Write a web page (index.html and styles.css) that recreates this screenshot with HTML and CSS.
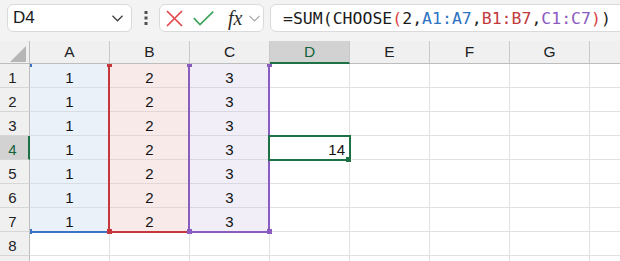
FILE: index.html
```html
<!DOCTYPE html>
<html lang="en">
  <head>
    <meta charset="UTF-8" />
    <title>CHOOSE</title>
    <link rel="stylesheet" href="styles.css">
  </head>
  <body>
    <div class="toolbar">
      <div class="namebox">
        <span>D4</span>
        <svg width="11" height="7" viewBox="0 0 11 7"><polyline points="0.5,0.8 5.5,5.8 10.5,0.8" fill="none" stroke="#404040" stroke-width="1.3"/></svg>
      </div>
      <div class="dots">
        <svg width="4" height="14" viewBox="0 0 4 14"><rect x="0.5" y="0" width="3" height="3" fill="#505050"/><rect x="0.5" y="5.5" width="3" height="3" fill="#505050"/><rect x="0.5" y="11" width="3" height="3" fill="#505050"/></svg>
      </div>
      <div class="fxbox">
        <svg class="cancel" width="17" height="17" viewBox="0 0 17 17"><path d="M1 1 L16 16 M16 1 L1 16" stroke="#e2474b" stroke-width="1.7" fill="none"/></svg>
        <svg class="enter" width="21" height="15" viewBox="0 0 21 15"><polyline points="0.8,7.2 7,13.6 20.2,0.6" fill="none" stroke="#3ea45c" stroke-width="1.7"/></svg>
        <span class="fx">fx</span>
        <svg class="more" width="11" height="7" viewBox="0 0 11 7"><polyline points="0.5,0.8 5.5,5.8 10.5,0.8" fill="none" stroke="#a6a6a6" stroke-width="1.2"/></svg>
      </div>
      <div class="formula"><span>=SUM(CHOOSE</span><span class="paren">(</span><span>2,</span><span class="ref-a">A1:A7</span><span>,</span><span class="ref-b">B1:B7</span><span>,</span><span class="ref-c">C1:C7</span><span class="paren">)</span><span>)</span></div>
    </div>

    <div class="sheet">
      <div class="h corner"><svg width="16" height="16" viewBox="0 0 16 16"><polygon points="16,0 16,16 0,16" fill="#b6b6b6"/></svg></div>
      <div class="h">A</div>
      <div class="h">B</div>
      <div class="h">C</div>
      <div class="h sel">D</div>
      <div class="h">E</div>
      <div class="h">F</div>
      <div class="h">G</div>
      <div class="h last"></div>

      <div class="rh">1</div><div class="c a">1</div><div class="c b">2</div><div class="c cc">3</div><div class="c"></div><div class="c"></div><div class="c"></div><div class="c"></div><div class="c last"></div>
      <div class="rh">2</div><div class="c a">1</div><div class="c b">2</div><div class="c cc">3</div><div class="c"></div><div class="c"></div><div class="c"></div><div class="c"></div><div class="c last"></div>
      <div class="rh">3</div><div class="c a">1</div><div class="c b">2</div><div class="c cc">3</div><div class="c"></div><div class="c"></div><div class="c"></div><div class="c"></div><div class="c last"></div>
      <div class="rh sel">4</div><div class="c a">1</div><div class="c b">2</div><div class="c cc">3</div><div class="c num">14</div><div class="c"></div><div class="c"></div><div class="c"></div><div class="c last"></div>
      <div class="rh">5</div><div class="c a">1</div><div class="c b">2</div><div class="c cc">3</div><div class="c"></div><div class="c"></div><div class="c"></div><div class="c"></div><div class="c last"></div>
      <div class="rh">6</div><div class="c a">1</div><div class="c b">2</div><div class="c cc">3</div><div class="c"></div><div class="c"></div><div class="c"></div><div class="c"></div><div class="c last"></div>
      <div class="rh">7</div><div class="c a">1</div><div class="c b">2</div><div class="c cc">3</div><div class="c"></div><div class="c"></div><div class="c"></div><div class="c"></div><div class="c last"></div>
      <div class="rh">8</div><div class="c"></div><div class="c"></div><div class="c"></div><div class="c"></div><div class="c"></div><div class="c"></div><div class="c"></div><div class="c last"></div>
      <div class="rh"></div><div class="c"></div><div class="c"></div><div class="c"></div><div class="c"></div><div class="c"></div><div class="c"></div><div class="c"></div><div class="c last"></div>

      <!-- range outlines for the formula references -->
      <div class="mark blue bottom-a"></div>
      <div class="mark red left-b"></div>
      <div class="mark red bottom-b"></div>
      <div class="mark purple left-c"></div>
      <div class="mark purple right-c"></div>
      <div class="mark purple bottom-c"></div>

      <div class="mark blue grip-a-top"></div>
      <div class="mark blue grip-a-bot"></div>
      <div class="mark red grip grip-b-top"></div>
      <div class="mark red grip grip-b-bot"></div>
      <div class="mark purple grip grip-c-top"></div>
      <div class="mark purple grip grip-c-bot"></div>
      <div class="mark purple grip grip-d-top"></div>
      <div class="mark purple grip grip-d-bot"></div>

      <!-- active cell -->
      <div class="active"></div>
      <div class="fill-handle"></div>
    </div>
  </body>
</html>
```

FILE: styles.css
```css
body {
  margin: 0;
  width: 620px;
  height: 261px;
  overflow: hidden;
  background: #f3f3f3;
  font-family: "Liberation Sans", Arial, sans-serif;
  color: #1b1b1b;
}

.toolbar {
  display: flex;
  align-items: flex-start;
  height: 41px;
  box-sizing: border-box;
  padding: 4px 0 0 7px;
}

.namebox {
  width: 125px;
  height: 28px;
  box-sizing: border-box;
  display: flex;
  align-items: center;
  justify-content: space-between;
  padding: 0 8px 0 5px;
  background: #fff;
  border: 1px solid #dadada;
  border-radius: 6px;
  font-size: 17px;
}

.dots {
  width: 27px;
  height: 28px;
  display: flex;
  align-items: center;
  justify-content: center;
}

.fxbox {
  width: 105px;
  height: 28px;
  box-sizing: border-box;
  display: flex;
  align-items: center;
  background: #fff;
  border: 1px solid #dadada;
  border-radius: 6px;
}

.cancel {
  margin-left: 6px;
}

.enter {
  margin-left: 10px;
  margin-top: 1px;
}

.fx {
  margin-left: 14px;
  font-family: "Liberation Serif", "Times New Roman", serif;
  font-style: italic;
  font-size: 20px;
  color: #2b2b2b;
  line-height: 1;
}

.more {
  margin-left: 7px;
}

.formula {
  flex: 1;
  height: 28px;
  box-sizing: border-box;
  margin-left: 6px;
  margin-right: -12px;
  padding: 3px 0 0 12px;
  background: #fff;
  border: 1px solid #dadada;
  border-radius: 6px;
  font-family: "DejaVu Sans Mono", "Liberation Mono", monospace;
  font-size: 16.5px;
  line-height: 22px;
  white-space: nowrap;
  color: #1b1b1b;
}

.paren {
  color: #d8403f;
}

.ref-a {
  color: #2f74c4;
}

.ref-b {
  color: #c23a3c;
}

.ref-c {
  color: #8a5bbf;
}

/* grid */

.sheet {
  position: relative;
  display: grid;
  grid-template-columns: 30px repeat(7, 80px) 1fr;
  grid-template-rows: 23px repeat(9, 24px);
  background: #fff;
}

.h {
  box-sizing: border-box;
  display: flex;
  align-items: center;
  justify-content: center;
  background: #f0f0f0;
  border-right: 1px solid #c9c9c9;
  border-bottom: 1px solid #bdbdbd;
  font-size: 15.5px;
  color: #222;
}

.h.corner {
  align-items: flex-end;
  justify-content: flex-end;
  padding: 0 3px 1px 0;
  border-right-color: #bdbdbd;
}

.h.sel {
  background: #d2d2d2;
  border-bottom: 2px solid #1e7145;
  color: #14633a;
}

.h.last {
  border-right: none;
}

.rh {
  box-sizing: border-box;
  display: flex;
  align-items: center;
  justify-content: center;
  padding: 4px 4px 0 0;
  background: #f0f0f0;
  border-right: 1px solid #bdbdbd;
  border-bottom: 1px solid #d6d6d6;
  font-size: 15px;
  color: #222;
}

.rh.sel {
  background: #d2d2d2;
  border-right: 2px solid #1e7145;
  padding-right: 3px;
  color: #14633a;
}

.c {
  box-sizing: border-box;
  display: flex;
  align-items: center;
  justify-content: center;
  padding-top: 4px;
  border-right: 1px solid #e1e1e1;
  border-bottom: 1px solid #e1e1e1;
  font-size: 15px;
  color: #111;
}

.c.last {
  border-right: none;
}

.c.a {
  background: #ebf1f9;
  border-color: #d9dde4;
}

.c.b {
  background: #f9eaea;
  border-color: #e2d6d6;
}

.c.cc {
  background: #f1eef8;
  border-color: #dcd8e3;
}

.c.num {
  justify-content: flex-end;
  padding-right: 4px;
  padding-top: 3px;
}

.mark {
  position: absolute;
}

.blue {
  background: #3b74c4;
}

.red {
  background: #c6373b;
}

.purple {
  background: #8b5cbf;
}

.bottom-a { left: 30px; top: 190px; width: 80px; height: 2px; }
.bottom-b { left: 110px; top: 190px; width: 80px; height: 2px; }
.bottom-c { left: 190px; top: 190px; width: 80px; height: 2px; }
.left-b { left: 108px; top: 23px; width: 2px; height: 169px; }
.left-c { left: 188px; top: 23px; width: 2px; height: 169px; }
.right-c { left: 268px; top: 23px; width: 2px; height: 169px; }

.grip { width: 5px; height: 5px; }
.grip-a-top { left: 30px; top: 23px; width: 2px; height: 3px; }
.grip-a-bot { left: 30px; top: 188px; width: 2px; height: 5px; }
.grip-b-top { left: 107px; top: 23px; height: 3px; }
.grip-b-bot { left: 107px; top: 188px; }
.grip-c-top { left: 187px; top: 23px; height: 3px; }
.grip-c-bot { left: 187px; top: 188px; }
.grip-d-top { left: 267px; top: 23px; height: 3px; }
.grip-d-bot { left: 267px; top: 188px; }

.active {
  position: absolute;
  left: 268px;
  top: 94px;
  width: 83px;
  height: 26px;
  box-sizing: border-box;
  border: 2px solid #1e7145;
}

.fill-handle {
  position: absolute;
  left: 346px;
  top: 116px;
  width: 5px;
  height: 5px;
  background: #1e7145;
  border: 1px solid #fff;
  border-top: none;
  border-left: none;
}
```
